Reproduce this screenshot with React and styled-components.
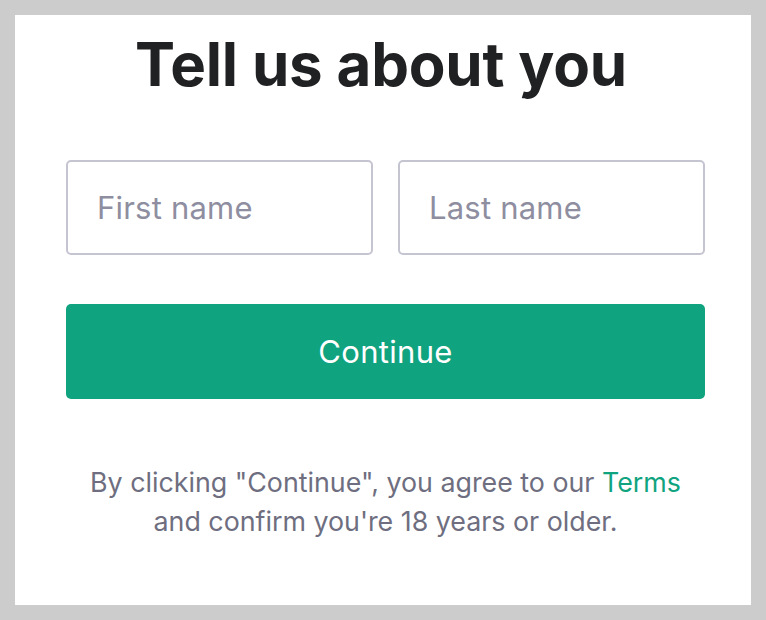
import React from "react";
import styled, { createGlobalStyle } from "styled-components";

const Global = createGlobalStyle`
  html, body { margin: 0; padding: 0; }
  body {
    background: #cccccc;
    font-family: Inter, "Noto Sans", "Liberation Sans", sans-serif;
    -webkit-font-smoothing: antialiased;
  }
  * { box-sizing: border-box; }
`;

const Page = styled.div`
  padding: 15px;
  height: 620px;
`;

const Card = styled.main`
  background: #ffffff;
  height: 590px;
  padding: 13px 46px 0 51px;
  display: flex;
  flex-direction: column;
`;

const Title = styled.h1`
  margin: 0;
  font-size: 60px;
  line-height: 72px;
  font-weight: 700;
  color: #202123;
  text-align: center;
  letter-spacing: -0.2px;
  padding-right: 9px;
`;

const Row = styled.div`
  display: grid;
  grid-template-columns: 1fr 1fr;
  gap: 25px;
  margin-top: 60px;
`;

const Field = styled.input`
  height: 95px;
  width: 100%;
  border: 2px solid #c5c5d2;
  border-radius: 5px;
  padding: 0 29px;
  font-family: inherit;
  font-size: 31px;
  letter-spacing: 0.2px;
  color: #202123;
  background: #fff;
  outline: none;
  &::placeholder { color: #8e8ea0; }
`;

const Button = styled.button`
  margin-top: 49px;
  height: 95px;
  width: 100%;
  border: none;
  border-radius: 5px;
  background: #10a37f;
  color: #ffffff;
  font-family: inherit;
  font-size: 31px;
  letter-spacing: 0.3px;
  cursor: pointer;
`;

const Note = styled.p`
  margin: 64px 0 0;
  text-align: center;
  font-size: 26.8px;
  line-height: 39px;
  color: #6e6e80;
`;

const Link = styled.a`
  color: #10a37f;
  text-decoration: none;
`;

export default function App() {
  return (
    <>
      <Global />
      <Page>
        <Card>
          <Title>Tell us about you</Title>
          <Row>
            <Field placeholder="First name" />
            <Field placeholder="Last name" />
          </Row>
          <Button>Continue</Button>
          <Note>
            By clicking "Continue", you agree to our <Link href="#">Terms</Link>
            <br />
            and confirm you're 18 years or older.
          </Note>
        </Card>
      </Page>
    </>
  );
}
